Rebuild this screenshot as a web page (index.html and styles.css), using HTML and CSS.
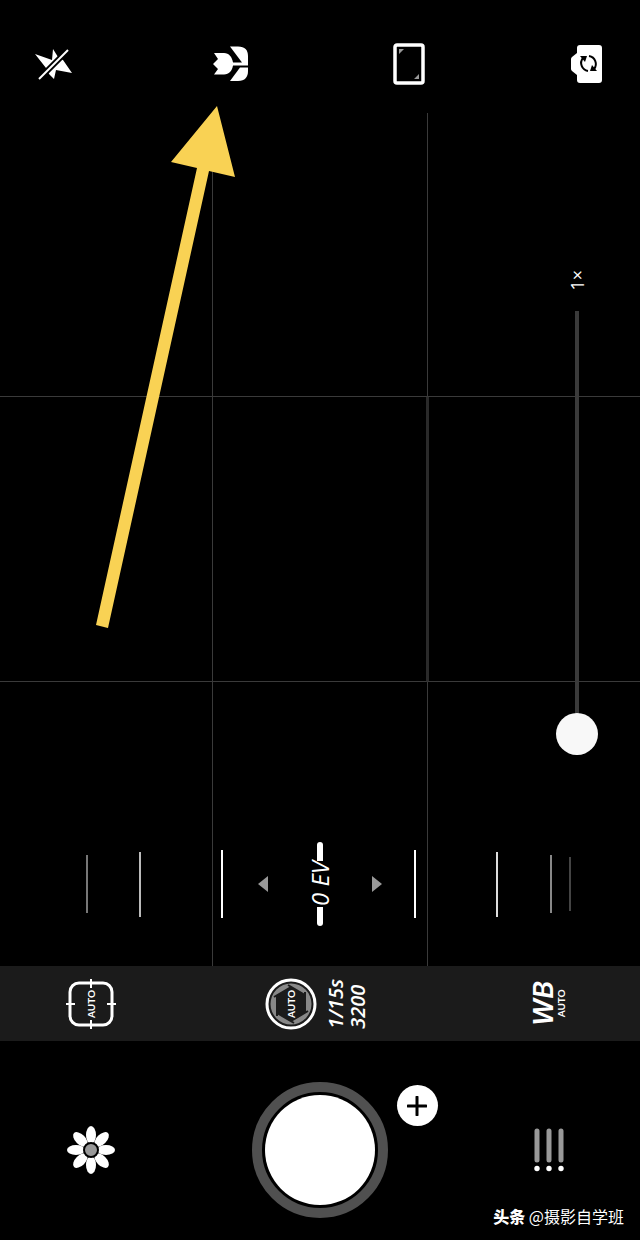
FILE: index.html
```html
<!DOCTYPE html>
<html lang="zh-CN">
<head>
  <meta charset="UTF-8">
  <meta name="viewport" content="width=device-width, initial-scale=1.0">
  <title>Camera</title>
  <link rel="stylesheet" href="styles.css">
</head>
<body>

<header class="top-bar">
  <button class="icon-btn" aria-label="Flash off">
    <svg width="42" height="42" viewBox="0 0 42 42">
      <path fill="#fff" d="M3 11 L20 17 L21 6 L26 14 L31 17 L40 30 L24 27 L22 36 L17 31 L14 25 Z"/>
      <path stroke="#000" stroke-width="6" d="M6 37 L37 6"/>
      <path stroke="#fff" stroke-width="2" d="M7 36 L36 7"/>
    </svg>
  </button>
  <button class="icon-btn" aria-label="Macro">
    <svg width="42" height="42" viewBox="0 0 42 42" fill="#fff">
      <path d="M4 10 H14 C19 10 22 14 23 19.500 H32 L20 3.500 H28 C35 3.500 38 7 38 13 V22.500 H23 C22 28 19 31.500 14 31.500 H4 L8 26 L3 21 L8 16 Z"/>
      <path d="M38 24.500 V28 C38 34 35 38 28 38 H20 L30 24.500 Z"/>
    </svg>
  </button>
  <button class="icon-btn" aria-label="Aspect ratio">
    <svg width="42" height="42" viewBox="0 0 42 42">
      <rect x="7" y="2" width="28" height="38" rx="2" fill="none" stroke="#fff" stroke-width="3.500"/>
      <path fill="#999" d="M11 6 H16 L11 11 Z M31 36 H26 L31 31 Z"/>
    </svg>
  </button>
  <button class="icon-btn" aria-label="Switch camera">
    <svg width="42" height="42" viewBox="0 0 42 42">
      <path fill="#fff" d="M14 2 H33 Q36 2 36 5 V37 Q36 40 33 40 H14 Q11 40 11 37 V32 L6 28 Q5 27 5 26 V16 Q5 15 6 14 L11 10 V5 Q11 2 14 2 Z"/>
      <path fill="none" stroke="#000" stroke-width="2" d="M22 28 A8 8 0 0 1 17 15 M23 13 A8 8 0 0 1 28 26"/>
      <path d="M14 13 L21 13 L19 19 Z M31 28 L24 28 L26 22 Z"/>
    </svg>
  </button>
</header>

<main class="viewfinder">
  <div class="thirds">
    <span></span><span></span><span></span>
    <span></span><span class="thick"></span><span></span>
    <span></span><span></span><span></span>
  </div>

  <div class="zoom">
    <label class="sideways zoom-label" for="zoom">1×</label>
    <input class="zoom-slider" id="zoom" type="range" min="1" max="8" value="1">
  </div>

  <div class="ev-dial">
    <svg class="ev-ticks" viewBox="0 0 640 86" preserveAspectRatio="none">
      <path stroke="#777" stroke-width="2" d="M87 14 V72"/>
      <path stroke="#bbb" stroke-width="2" d="M140 11 V76"/>
      <path stroke="#fff" stroke-width="2" d="M222 9 V77 M415 9 V77"/>
      <path stroke="#ddd" stroke-width="2" d="M497 11 V76"/>
      <path stroke="#888" stroke-width="2" d="M551 14 V72"/>
      <path stroke="#444" stroke-width="2" d="M570 16 V70"/>
    </svg>
    <div class="ev-control">
      <button class="ev-step" aria-label="Decrease exposure">
        <svg width="10" height="16" viewBox="0 0 10 16"><path fill="#999" d="M10 0 V16 L0 8 Z"/></svg>
      </button>
      <div class="ev-value">
        <i class="ev-mark"></i>
        <span class="sideways">0 EV</span>
        <i class="ev-mark"></i>
      </div>
      <button class="ev-step" aria-label="Increase exposure">
        <svg width="10" height="16" viewBox="0 0 10 16"><path fill="#999" d="M0 0 V16 L10 8 Z"/></svg>
      </button>
    </div>
  </div>
</main>

<section class="settings">
  <button class="setting" aria-label="Focus mode">
    <svg width="50" height="50" viewBox="0 0 50 50">
      <rect x="4" y="4" width="42" height="42" rx="9" fill="none" stroke="#fff" stroke-width="3"/>
      <path stroke="#fff" stroke-width="2" d="M25 0 V9 M25 41 V50 M0 25 H9 M41 25 H50"/>
      <text class="auto" transform="translate(29 25) rotate(-90)">AUTO</text>
    </svg>
  </button>
  <button class="setting" aria-label="Shutter speed and ISO">
    <svg width="52" height="52" viewBox="0 0 52 52">
      <circle cx="26" cy="26" r="24" fill="none" stroke="#fff" stroke-width="3"/>
      <circle cx="26" cy="26" r="20.500" fill="#888"/>
      <path fill="#1b1b1b" d="M26 9 L40 17 V35 L26 43 L12 35 V17 Z"/>
      <path stroke="#1b1b1b" stroke-width="2" d="M26 9 L9 19 M40 17 L23 7 M40 35 V14 M26 43 L43 33 M12 35 L29 45 M12 17 V38"/>
      <text class="auto" transform="translate(30 26) rotate(-90)">AUTO</text>
    </svg>
    <span class="sideways exposure">1/15s<br>3200</span>
  </button>
  <button class="setting" aria-label="White balance">
    <span class="sideways wb">WB<small>AUTO</small></span>
  </button>
</section>

<footer class="controls">
  <button class="icon-btn" aria-label="Gallery">
    <svg width="48" height="48" viewBox="-24 -24 48 48">
      <g fill="#fff">
        <ellipse cy="-15" rx="5" ry="9"/>
        <ellipse cy="-15" rx="5" ry="9" transform="rotate(45)"/>
        <ellipse cy="-15" rx="5" ry="9" transform="rotate(90)"/>
        <ellipse cy="-15" rx="5" ry="9" transform="rotate(135)"/>
        <ellipse cy="-15" rx="5" ry="9" transform="rotate(180)"/>
        <ellipse cy="-15" rx="5" ry="9" transform="rotate(225)"/>
        <ellipse cy="-15" rx="5" ry="9" transform="rotate(270)"/>
        <ellipse cy="-15" rx="5" ry="9" transform="rotate(315)"/>
      </g>
      <circle r="7" fill="#999" stroke="#000" stroke-width="2"/>
    </svg>
  </button>
  <div class="shutter-wrap">
    <button class="shutter" aria-label="Take photo"></button>
    <button class="add" aria-label="Add">
      <svg width="20" height="20" viewBox="0 0 20 20"><path stroke="#000" stroke-width="3" stroke-linecap="round" d="M10 1 V19 M1 10 H19"/></svg>
    </button>
  </div>
  <button class="icon-btn" aria-label="Modes">
    <svg width="30" height="44" viewBox="0 0 30 44">
      <path stroke="#999" stroke-width="5" stroke-linecap="round" d="M3 3 V32 M15 3 V32 M27 3 V32"/>
      <g fill="#fff"><circle cx="3" cy="40.500" r="2.700"/><circle cx="15" cy="40.500" r="2.700"/><circle cx="27" cy="40.500" r="2.700"/></g>
    </svg>
  </button>
  <p class="credit"><b>头条</b> @摄影自学班</p>
</footer>

<!-- Arrow pointing at the macro button -->
<svg class="pointer" width="140" height="523" viewBox="96 106 140 523">
  <path fill="#f9d254" d="M217 106 L235 177 L209 171 L108 628 L96 625 L197 168 L171 162 Z"/>
</svg>

</body>
</html>
```

FILE: styles.css
```css
* {
  box-sizing: border-box;
}
body {
  position: relative;
  display: flex;
  flex-direction: column;
  min-height: 100vh;
  margin: 0;
  background: #000;
  color: #fff;
  font-family: "Open Sans", "Noto Sans CJK SC", sans-serif;
}
button {
  padding: 0;
  border: 0;
  background: none;
  color: inherit;
  font: inherit;
  cursor: pointer;
}
svg {
  display: block;
}
/* text that reads from bottom to top */
.sideways {
  writing-mode: vertical-rl;
  text-orientation: sideways;
  transform: rotate(180deg);
}

.top-bar {
  display: flex;
  justify-content: space-between;
  padding: 43px 32px 28px;
}

.viewfinder {
  flex: 1;
  display: grid;
  grid-template: 1fr / 1fr;
}
.thirds,
.zoom,
.ev-dial {
  grid-area: 1 / 1;
}
.thirds {
  display: grid;
  grid-template-columns: 213fr 215fr 212fr;
  grid-template-rows: repeat(3, 1fr);
}
.thirds span {
  border: 0 solid #3a3a3a;
  border-right-width: 1px;
  border-bottom-width: 1px;
}
.thirds span:nth-child(3n) {
  border-right-width: 0;
}
.thirds span:nth-child(n+7) {
  border-bottom-width: 0;
}
.thirds .thick {
  margin-right: -1px;
  border-right: 3px solid #2a2a2a;
}

.zoom {
  justify-self: end;
  align-self: start;
  display: flex;
  flex-direction: column;
  align-items: center;
  gap: 20px;
  margin: 157px 42px 0 0;
}
.zoom-label {
  font-size: 18px;
  line-height: 24px;
}
.zoom-slider {
  writing-mode: vertical-lr;
  direction: rtl;
  appearance: none;
  width: 42px;
  height: 444px;
  margin: 0;
  background: none;
}
.zoom-slider::-webkit-slider-runnable-track {
  width: 4px;
  height: 100%;
  background: #3a3a3a;
}
.zoom-slider::-webkit-slider-thumb {
  appearance: none;
  width: 42px;
  height: 42px;
  margin-left: -19px;
  border-radius: 50%;
  background: #f8f8f8;
}

.ev-dial {
  align-self: end;
  display: grid;
  height: 86px;
  margin-bottom: 39px;
}
.ev-ticks,
.ev-control {
  grid-area: 1 / 1;
  width: 100%;
  height: 86px;
}
.ev-control {
  display: flex;
  justify-content: center;
  align-items: center;
  gap: 36px;
}
.ev-value {
  display: flex;
  flex-direction: column;
  align-items: center;
  font-size: 24px;
  font-style: italic;
  line-height: 32px;
}
.ev-mark {
  width: 6px;
  height: 19px;
  border-radius: 3px 3px 0 0;
  background: #fff;
}
.ev-mark:last-child {
  border-radius: 0 0 3px 3px;
}

.settings,
.controls {
  display: grid;
  grid-template-columns: 2fr 3fr 2fr;
  place-items: center;
}
.settings {
  height: 75px;
  background: #1b1b1b;
}
.setting {
  display: flex;
  align-items: center;
  gap: 8px;
}
.auto {
  fill: #fff;
  font: bold 10px Lato, sans-serif;
  text-anchor: middle;
}
.exposure {
  margin-right: 6px;
  font-size: 20px;
  font-style: italic;
  font-weight: 600;
  line-height: 22px;
  text-align: left;
}
.wb {
  font: italic 600 27px/24px Inter, sans-serif;
  text-align: center;
}
.wb small {
  display: block;
  font: bold 10px/10px Lato, sans-serif;
}

.controls {
  position: relative;
  padding: 41px 0 22px;
}
.shutter-wrap {
  position: relative;
}
.shutter {
  display: block;
  width: 136px;
  height: 136px;
  padding: 3px;
  border: 10px solid #505050;
  border-radius: 50%;
  background: #fff content-box;
}
.add {
  position: absolute;
  top: 3px;
  right: -50px;
  display: grid;
  place-items: center;
  width: 41px;
  height: 41px;
  border-radius: 50%;
  background: #fff;
}
.credit {
  position: absolute;
  right: 16px;
  bottom: 13px;
  margin: 0;
  font: 16px/22px "Noto Sans CJK SC", sans-serif;
}
.credit b {
  font-weight: 900;
}

.pointer {
  position: absolute;
  top: 106px;
  left: 15%;
  pointer-events: none;
}
```
